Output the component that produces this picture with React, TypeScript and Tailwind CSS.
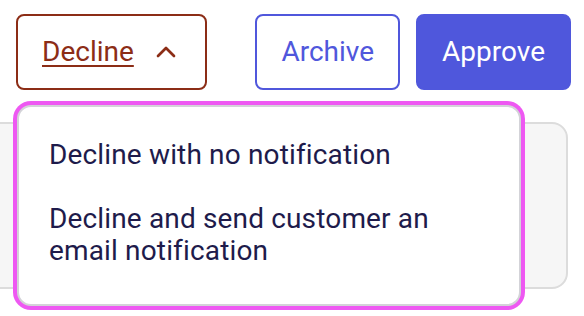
import { ChevronUp } from "lucide-react";

const options = [
  "Decline with no notification",
  "Decline and send customer an email notification",
];

export default function App() {
  return (
    <div className="relative h-[316px] w-[584px] overflow-hidden bg-white font-['Roboto',sans-serif] text-[28px] leading-[32px]">
      <div className="flex items-center justify-between pl-4 pr-[13px] pt-[14px]">
        <button className="flex items-center gap-4 rounded-lg border-2 border-[#8c2d16] py-[20px] pl-6 pr-[23px] text-[#8c2d16]">
          <span className="underline decoration-2 underline-offset-[4px]">Decline</span>
          <ChevronUp size={32} strokeWidth={2} />
        </button>
        <div className="flex items-center gap-4">
          <button className="rounded-lg border-2 border-[#5057dc] px-6 py-[20px] text-[#5057dc]">Archive</button>
          <button className="rounded-lg border-2 border-[#4f57dc] bg-[#4f57dc] px-6 py-[20px] text-white">Approve</button>
        </div>
      </div>

      {/* content panel sitting under the open menu */}
      <div className="ml-[-16px] mt-8 h-[167px] w-[584px] rounded-2xl border-2 border-[#dcdcdc] bg-[#f6f6f6]" />

      <div className="absolute left-[17px] top-[105px] w-[504px] rounded-[14px] border-2 border-[#d3d3d8] bg-white pt-4 pb-[21px] tracking-[0.15px] text-[#1e1b4b] shadow-[0_3px_0_0_#cfcfd4] ring-4 ring-[#ee58f2]">
        {options.map((label) => (
          <div key={label} className="px-[30px] py-4">
            {label}
          </div>
        ))}
      </div>
    </div>
  );
}
